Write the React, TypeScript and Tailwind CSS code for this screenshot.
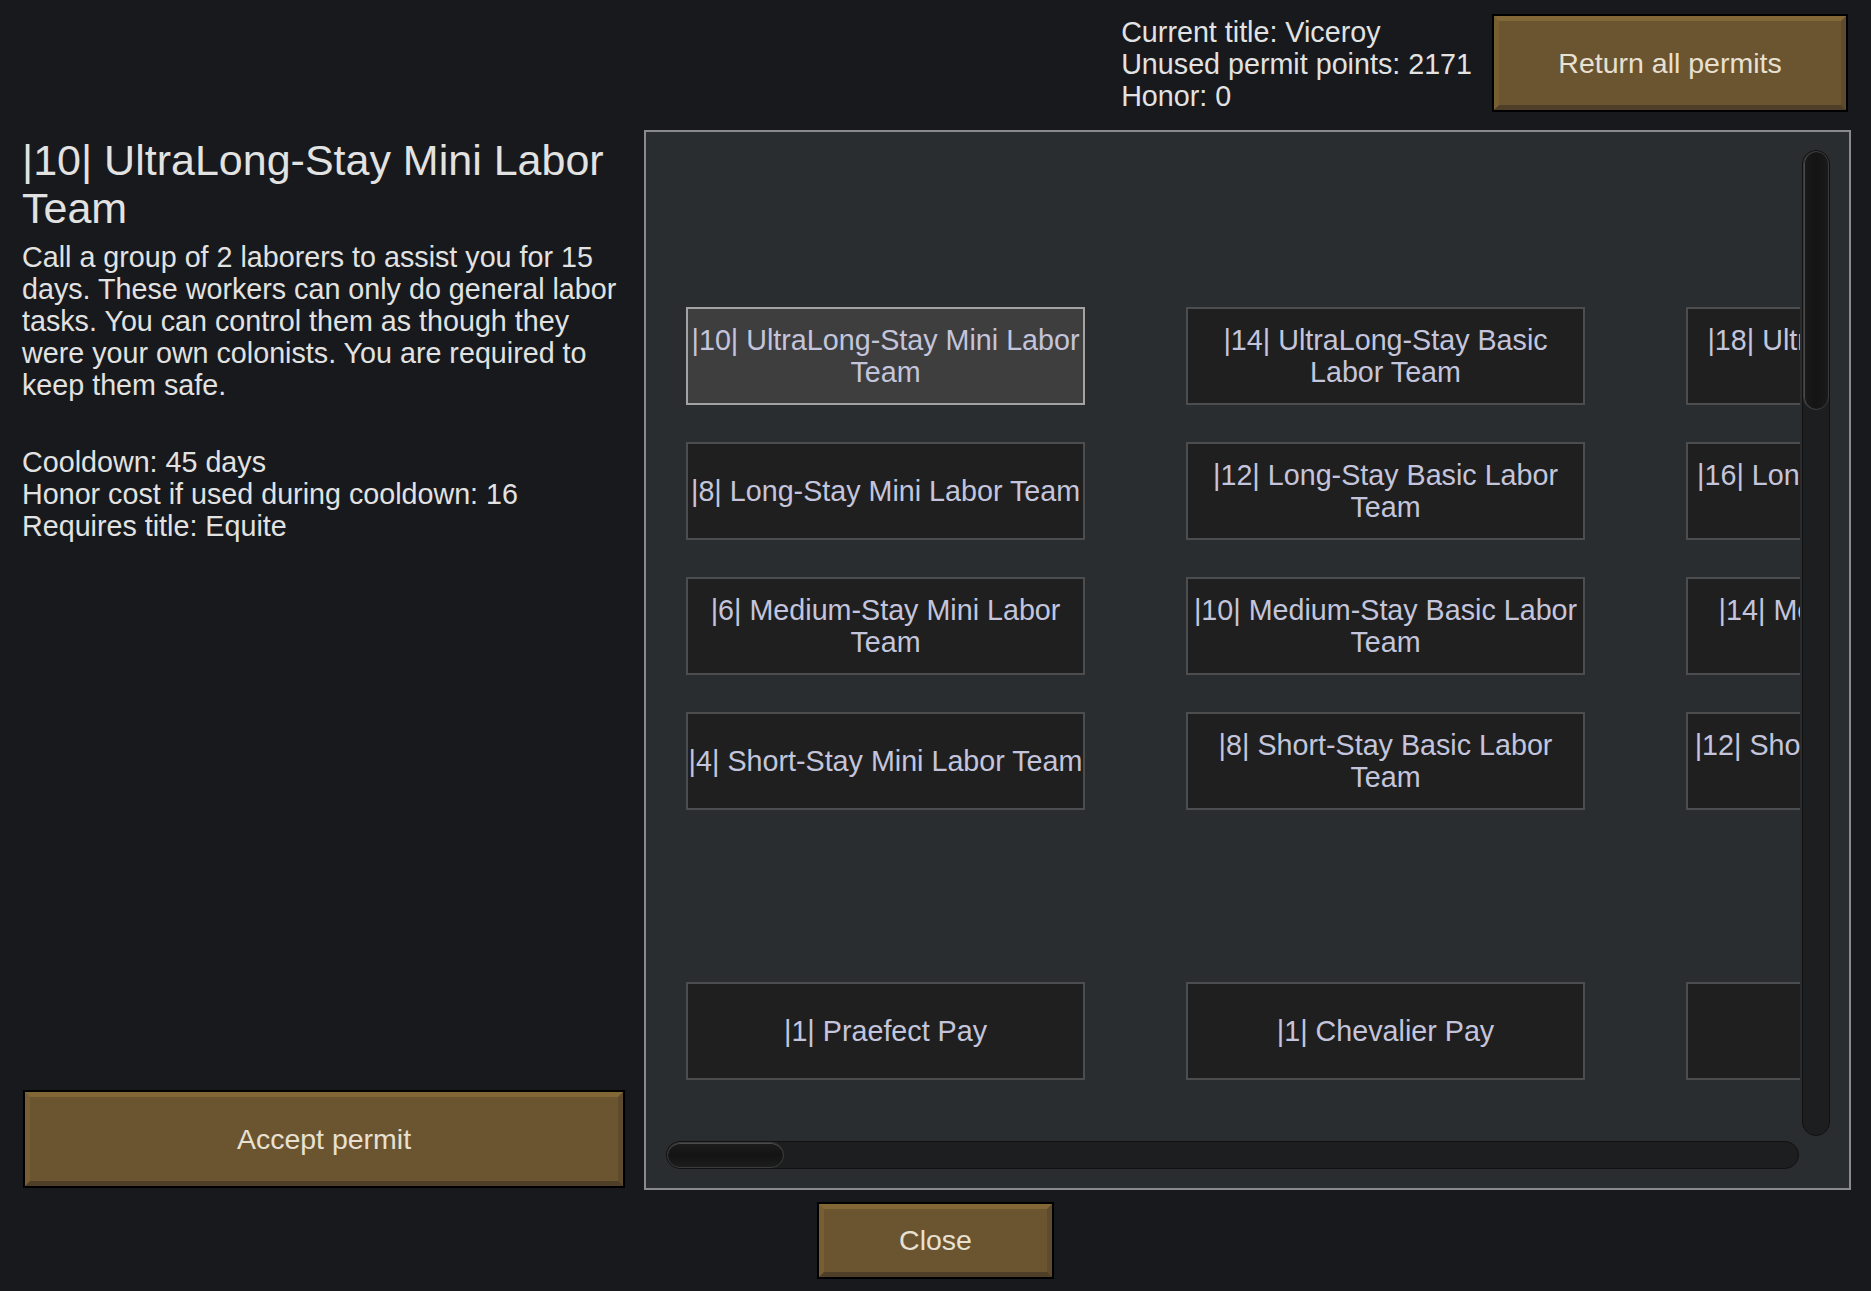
import React from "react";

const font = { fontFamily: '"Liberation Sans", Arial, sans-serif' };

type Permit = { lines: string[]; selected?: boolean };

const rows: (Permit | null)[][] = [
  [
    { lines: ["|10| UltraLong-Stay Mini Labor", "Team"], selected: true },
    { lines: ["|14| UltraLong-Stay Basic", "Labor Team"] },
    { lines: ["|18| UltraLong-Stay Medium", "Labor Team"] },
  ],
  [
    { lines: ["|8| Long-Stay Mini Labor Team"] },
    { lines: ["|12| Long-Stay Basic Labor", "Team"] },
    { lines: ["|16| Long-Stay Medium Labor", "Team"] },
  ],
  [
    { lines: ["|6| Medium-Stay Mini Labor", "Team"] },
    { lines: ["|10| Medium-Stay Basic Labor", "Team"] },
    { lines: ["|14| Medium-Stay Medium", "Labor Team"] },
  ],
  [
    { lines: ["|4| Short-Stay Mini Labor Team"] },
    { lines: ["|8| Short-Stay Basic Labor", "Team"] },
    { lines: ["|12| Short-Stay Medium Labor", "Team"] },
  ],
  [null, null, null],
  [
    { lines: ["|1| Praefect Pay"] },
    { lines: ["|1| Chevalier Pay"] },
    { lines: [""] },
  ],
];

const PermitCard = ({ p }: { p: Permit | null }) => {
  if (!p) return <div className="h-[98px] w-[399px] shrink-0" />;
  return (
    <div
      className={
        "flex h-[98px] w-[399px] shrink-0 flex-col items-center justify-center border-2 text-[28.7px] leading-[32px] text-[#c4c5dc] " +
        (p.selected
          ? "border-[#a3a3a3] bg-[#3e3e3f]"
          : "border-[#4c4d4e] bg-[#1f1f1f]")
      }
    >
      {p.lines.map((l, i) => (
        <div key={i} className="whitespace-nowrap">
          {l}
        </div>
      ))}
    </div>
  );
};

const GoldButton = ({
  label,
  className,
}: {
  label: string;
  className: string;
}) => (
  <div className={"border-2 border-black " + className}>
    <div className="flex h-full w-full items-center justify-center border-[5px] border-t-[#826737] border-l-[#785f33] border-b-[#4f3f28] border-r-[#5e4a2c] bg-[#6b5430] text-[28.5px] text-[#e8e1d2]">
      {label}
    </div>
  </div>
);

export default function App() {
  return (
    <div
      className="flex h-[1291px] w-[1871px] flex-col overflow-hidden bg-[#17191c] text-[#e2e2e2]"
      style={font}
    >
      {/* header */}
      <div className="flex h-[130px] items-start justify-end pr-[23px] pt-[14px]">
        <div className="mt-[2px] text-[28.7px] leading-[32px]">
          <div>Current title: Viceroy</div>
          <div>Unused permit points: 2171</div>
          <div>Honor: 0</div>
        </div>
        <GoldButton
          label="Return all permits"
          className="ml-[20px] h-[98px] w-[356px]"
        />
      </div>

      {/* body */}
      <div className="flex h-[1060px] gap-[20px] pl-[22px]">
        <div className="flex w-[602px] flex-col justify-between pb-[2px]">
          <div>
            <div className="mt-[6px] whitespace-nowrap text-[43px] leading-[48px]">
              <div>|10| UltraLong-Stay Mini Labor</div>
              <div>Team</div>
            </div>
            <div className="mt-[9px] whitespace-nowrap text-[28.7px] leading-[32px]">
              <div>Call a group of 2 laborers to assist you for 15</div>
              <div>days. These workers can only do general labor</div>
              <div>tasks. You can control them as though they</div>
              <div>were your own colonists. You are required to</div>
              <div>keep them safe.</div>
            </div>
            <div className="mt-[45px] whitespace-nowrap text-[28.7px] leading-[32px]">
              <div>Cooldown: 45 days</div>
              <div>Honor cost if used during cooldown: 16</div>
              <div>Requires title: Equite</div>
            </div>
          </div>
          <GoldButton label="Accept permit" className="ml-[1px] h-[98px] w-[602px]" />
        </div>

        {/* permit tree panel */}
        <div className="flex h-[1060px] w-[1207px] flex-col border-2 border-[#8a8a8a] bg-[#2a2d2f] pb-[19px] pl-[20px] pr-[19px] pt-[18px]">
          <div className="flex min-h-0 flex-1">
            <div className="min-w-0 flex-1 overflow-hidden pl-[20px] pt-[157px]">
              <div className="flex flex-col gap-[37px]">
                {rows.map((r, i) => (
                  <div key={i} className="flex gap-[101px]">
                    {r.map((p, j) => (
                      <PermitCard key={j} p={p} />
                    ))}
                  </div>
                ))}
              </div>
            </div>
            <div className="ml-[2px] flex w-[28px] shrink-0 flex-col rounded-full border border-[#111] bg-[#1d1e1f]">
              <div className="h-[259px] rounded-full border border-[#3a3b3c] bg-gradient-to-r from-[#1a1a1a] via-[#141414] to-[#1a1a1a] shadow-[inset_1px_0_0_#4a4a4a]" />
            </div>
          </div>
          <div className="mr-[31px] mt-[5px] flex h-[28px] rounded-full border border-[#111] bg-[#1d1e1f]">
            <div className="w-[117px] rounded-full border border-[#3a3b3c] bg-gradient-to-b from-[#1c1c1c] via-[#141414] to-[#1c1c1c] shadow-[inset_0_1px_0_#4a4a4a]" />
          </div>
        </div>
      </div>

      {/* footer */}
      <div className="flex justify-center pt-[12px]">
        <GoldButton label="Close" className="h-[77px] w-[237px]" />
      </div>
    </div>
  );
}
